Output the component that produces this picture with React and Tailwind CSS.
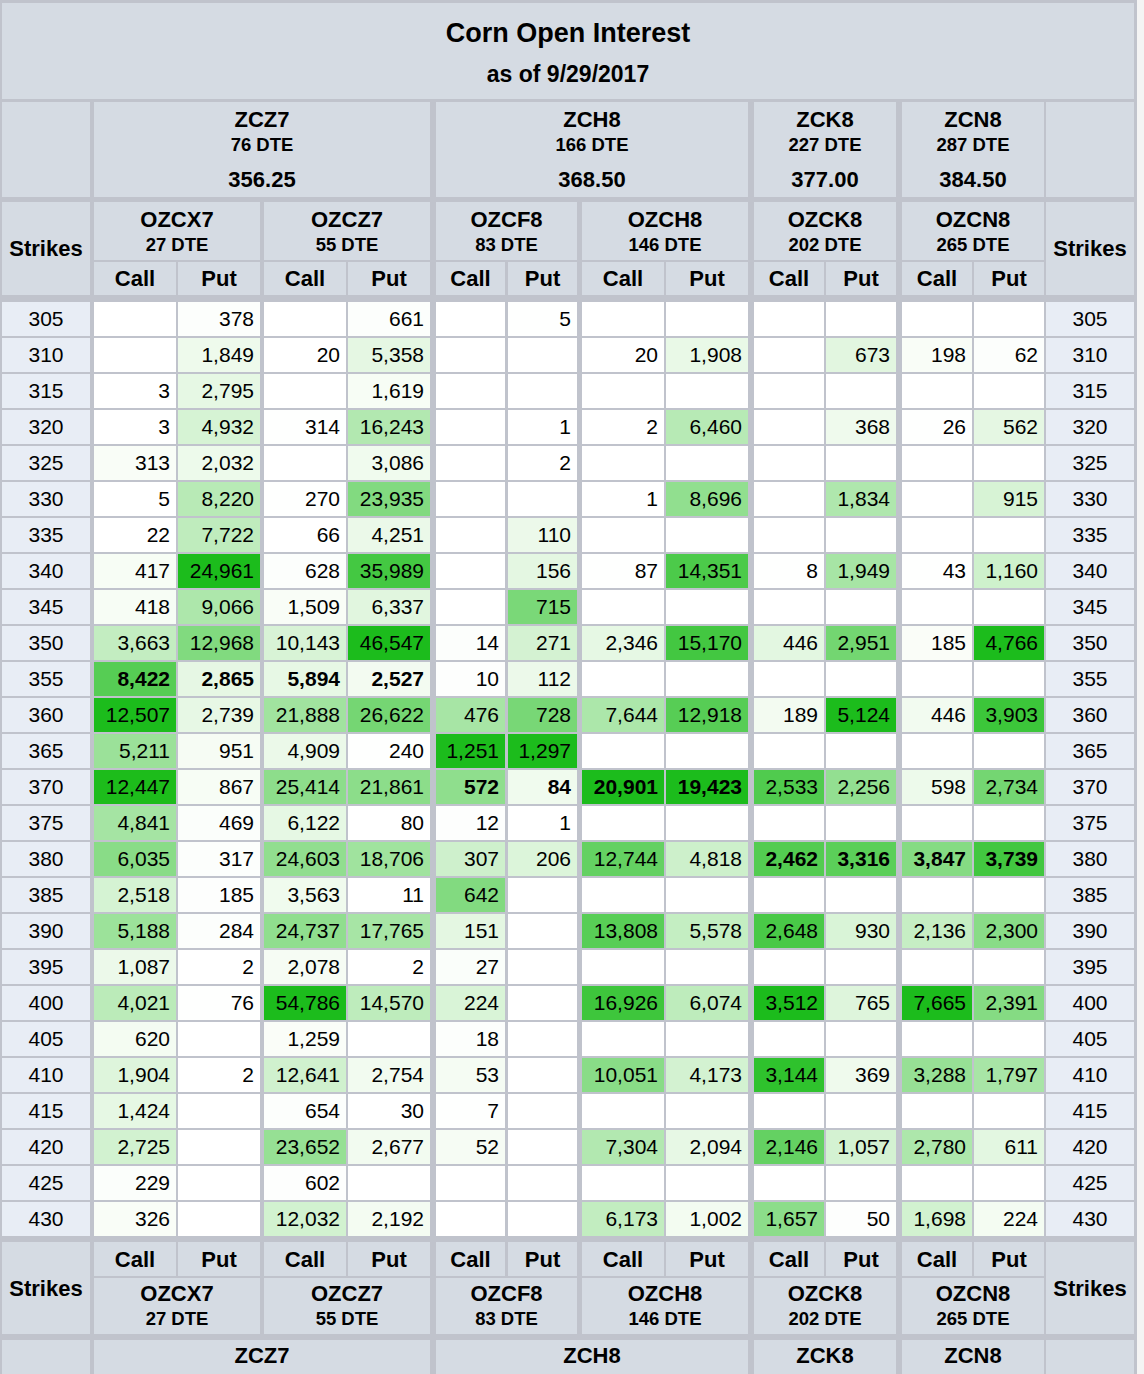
import React from 'react';

const STRIKES = [305, 310, 315, 320, 325, 330, 335, 340, 345, 350, 355, 360, 365, 370, 375, 380, 385, 390, 395, 400, 405, 410, 415, 420, 425, 430];

// OZCX7 C/P, OZCZ7 C/P, OZCF8 C/P, OZCH8 C/P, OZCK8 C/P, OZCN8 C/P
const DATA = [
  [null, 378, null, 661, null, 5, null, null, null, null, null, null],
  [null, 1849, 20, 5358, null, null, 20, 1908, null, 673, 198, 62],
  [3, 2795, null, 1619, null, null, null, null, null, null, null, null],
  [3, 4932, 314, 16243, null, 1, 2, 6460, null, 368, 26, 562],
  [313, 2032, null, 3086, null, 2, null, null, null, null, null, null],
  [5, 8220, 270, 23935, null, null, 1, 8696, null, 1834, null, 915],
  [22, 7722, 66, 4251, null, 110, null, null, null, null, null, null],
  [417, 24961, 628, 35989, null, 156, 87, 14351, 8, 1949, 43, 1160],
  [418, 9066, 1509, 6337, null, 715, null, null, null, null, null, null],
  [3663, 12968, 10143, 46547, 14, 271, 2346, 15170, 446, 2951, 185, 4766],
  [8422, 2865, 5894, 2527, 10, 112, null, null, null, null, null, null],
  [12507, 2739, 21888, 26622, 476, 728, 7644, 12918, 189, 5124, 446, 3903],
  [5211, 951, 4909, 240, 1251, 1297, null, null, null, null, null, null],
  [12447, 867, 25414, 21861, 572, 84, 20901, 19423, 2533, 2256, 598, 2734],
  [4841, 469, 6122, 80, 12, 1, null, null, null, null, null, null],
  [6035, 317, 24603, 18706, 307, 206, 12744, 4818, 2462, 3316, 3847, 3739],
  [2518, 185, 3563, 11, 642, null, null, null, null, null, null, null],
  [5188, 284, 24737, 17765, 151, null, 13808, 5578, 2648, 930, 2136, 2300],
  [1087, 2, 2078, 2, 27, null, null, null, null, null, null, null],
  [4021, 76, 54786, 14570, 224, null, 16926, 6074, 3512, 765, 7665, 2391],
  [620, null, 1259, null, 18, null, null, null, null, null, null, null],
  [1904, 2, 12641, 2754, 53, null, 10051, 4173, 3144, 369, 3288, 1797],
  [1424, null, 654, 30, 7, null, null, null, null, null, null, null],
  [2725, null, 23652, 2677, 52, null, 7304, 2094, 2146, 1057, 2780, 611],
  [229, null, 602, null, null, null, null, null, null, null, null, null],
  [326, null, 12032, 2192, null, null, 6173, 1002, 1657, 50, 1698, 224],
];

// at-the-money strike per option column (shown bold)
const BOLD_AT = [355, 355, 355, 355, 370, 370, 370, 370, 380, 380, 380, 380];

const COLS = [
  'w-[82px] ml-[4px]', 'w-[82px] ml-[2px]',
  'w-[82px] ml-[4px]', 'w-[82px] ml-[2px]',
  'w-[69px] ml-[6px]', 'w-[69px] ml-[3px]',
  'w-[82px] ml-[5px]', 'w-[82px] ml-[2px]',
  'w-[70px] ml-[6px]', 'w-[70px] ml-[2px]',
  'w-[70px] ml-[6px]', 'w-[70px] ml-[2px]',
];

const OPTIONS = [
  { name: 'OZCX7', dte: '27 DTE', cls: 'w-[166px] ml-[4px]', call: 'w-[82px]', put: 'w-[82px] ml-[2px]' },
  { name: 'OZCZ7', dte: '55 DTE', cls: 'w-[166px] ml-[4px]', call: 'w-[82px]', put: 'w-[82px] ml-[2px]' },
  { name: 'OZCF8', dte: '83 DTE', cls: 'w-[141px] ml-[6px]', call: 'w-[69px]', put: 'w-[69px] ml-[3px]' },
  { name: 'OZCH8', dte: '146 DTE', cls: 'w-[166px] ml-[5px]', call: 'w-[82px]', put: 'w-[82px] ml-[2px]' },
  { name: 'OZCK8', dte: '202 DTE', cls: 'w-[142px] ml-[6px]', call: 'w-[70px]', put: 'w-[70px] ml-[2px]' },
  { name: 'OZCN8', dte: '265 DTE', cls: 'w-[142px] ml-[6px]', call: 'w-[70px]', put: 'w-[70px] ml-[2px]' },
];

const FUTURES = [
  { name: 'ZCZ7', dte: '76 DTE', price: '356.25', cls: 'w-[336px] ml-[4px]' },
  { name: 'ZCH8', dte: '166 DTE', price: '368.50', cls: 'w-[312px] ml-[6px]' },
  { name: 'ZCK8', dte: '227 DTE', price: '377.00', cls: 'w-[142px] ml-[6px]' },
  { name: 'ZCN8', dte: '287 DTE', price: '384.50', cls: 'w-[142px] ml-[6px]' },
];

const MAX = COLS.map((_, c) => Math.max(...DATA.map((r) => r[c] || 0)));

// sampled from the sheet's shading: share of column max -> red channel
const STOPS = [
  [0, 255], [0.08, 237], [0.15, 222], [0.25, 205], [0.31, 191], [0.44, 147],
  [0.5, 133], [0.57, 118], [0.61, 100], [0.66, 88], [0.72, 80], [0.78, 67],
  [0.81, 62], [1, 28],
];

function shade(v, max) {
  if (v == null) return '#ffffff';
  const t = v / max;
  let r = 28;
  for (let i = 1; i < STOPS.length; i++) {
    const [t0, r0] = STOPS[i - 1];
    const [t1, r1] = STOPS[i];
    if (t <= t1) {
      r = r0 + ((t - t0) / (t1 - t0)) * (r1 - r0);
      break;
    }
  }
  const g = Math.round(188 + (r - 28) * 0.295);
  const b = Math.round(r > 28 && r < 250 ? r - 2 : r);
  return `rgb(${Math.round(r)}, ${g}, ${b})`;
}

const fmt = (v) => (v == null ? '' : v.toLocaleString('en-US'));

const HEAD = 'bg-[#d5dbe3]';

function FuturesRow() {
  return (
    <div className="mt-[3px] flex h-[95px]">
      <div className={`w-[88px] ${HEAD}`} />
      {FUTURES.map((f) => (
        <div key={f.name} className={`${f.cls} ${HEAD} flex flex-col items-center pt-[6px] font-bold`}>
          <div className="text-[22px] leading-[24px]">{f.name}</div>
          <div className="mt-[2px] text-[18.5px] leading-[22px]">{f.dte}</div>
          <div className="mt-[12px] text-[22px] leading-[24px]">{f.price}</div>
        </div>
      ))}
      <div className={`w-[88px] ml-[2px] ${HEAD}`} />
    </div>
  );
}

// footer repeat of the futures names; the page is cut just below them
function FuturesFooter() {
  return (
    <div className="mt-[6px] flex h-[36px]">
      <div className={`w-[88px] ${HEAD}`} />
      {FUTURES.map((f) => (
        <div key={f.name} className={`${f.cls} ${HEAD} flex justify-center pt-[4px] text-[22px] font-bold leading-[24px]`}>
          {f.name}
        </div>
      ))}
      <div className={`w-[88px] ml-[2px] ${HEAD}`} />
    </div>
  );
}

function OptionName({ o, bottom }) {
  return (
    <div className={`${HEAD} flex flex-col items-center font-bold ${bottom ? 'h-[56px] pt-[4px]' : 'h-[58px] pt-[6px]'}`}>
      <div className="text-[22px] leading-[24px]">{o.name}</div>
      <div className="mt-[2px] text-[18.5px] leading-[22px]">{o.dte}</div>
    </div>
  );
}

function CallPut({ o, bottom }) {
  return (
    <div className={`flex ${bottom ? 'h-[34px]' : 'mt-[2px] h-[33px]'}`}>
      <div className={`${o.call} ${HEAD} flex items-center justify-center text-[22px] font-bold`}>Call</div>
      <div className={`${o.put} ${HEAD} flex items-center justify-center text-[22px] font-bold`}>Put</div>
    </div>
  );
}

function HeaderBlock({ bottom }) {
  return (
    <div className={`flex ${bottom ? 'mt-[6px]' : 'mt-[5px]'}`}>
      <div className={`w-[88px] ${HEAD} flex items-center justify-center text-[22px] font-bold`}>Strikes</div>
      {OPTIONS.map((o) => (
        <div key={o.name} className={`${o.cls} flex flex-col`}>
          {bottom ? (
            <>
              <CallPut o={o} bottom />
              <div className="mt-[2px]">
                <OptionName o={o} bottom />
              </div>
            </>
          ) : (
            <>
              <OptionName o={o} />
              <CallPut o={o} />
            </>
          )}
        </div>
      ))}
      <div className={`w-[88px] ml-[2px] ${HEAD} flex items-center justify-center text-[22px] font-bold`}>Strikes</div>
    </div>
  );
}

function DataRow({ strike, row, first }) {
  return (
    <div className={`flex h-[34px] text-[21px] leading-[34px] ${first ? 'mt-[7px]' : 'mt-[2px]'}`}>
      <div className="w-[88px] bg-[#e8edf5] text-center">{strike}</div>
      {row.map((v, c) => (
        <div
          key={c}
          className={`${COLS[c]} pr-[6px] text-right ${BOLD_AT[c] === strike && v != null ? 'font-bold' : ''}`}
          style={{ backgroundColor: shade(v, MAX[c]) }}
        >
          {fmt(v)}
        </div>
      ))}
      <div className="w-[88px] ml-[2px] bg-[#e8edf5] text-center">{strike}</div>
    </div>
  );
}

export default function App() {
  return (
    <div className="min-h-screen bg-[#f4f4f4] font-['Liberation_Sans',Arial,sans-serif] text-black">
      <div className="w-[1137px] bg-[#c0c3cc] pl-[2px] pr-[3px] pt-[3px]">
        <div className={`h-[96px] ${HEAD} flex flex-col items-center pt-[15px] font-bold`}>
          <div className="text-[27px] leading-[30px]">Corn Open Interest</div>
          <div className="mt-[12px] text-[23px] leading-[28px]">as of 9/29/2017</div>
        </div>

        <FuturesRow />
        <HeaderBlock />

        {STRIKES.map((s, i) => (
          <DataRow key={s} strike={s} row={DATA[i]} first={i === 0} />
        ))}

        <HeaderBlock bottom />
        <FuturesFooter />
      </div>
    </div>
  );
}
